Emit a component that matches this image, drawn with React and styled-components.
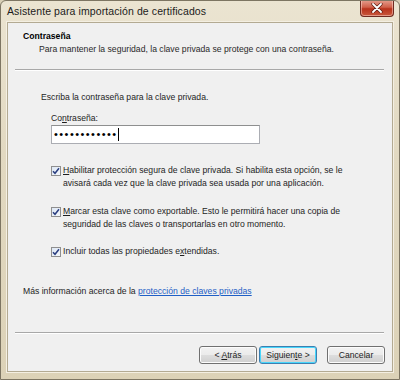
import styled, { createGlobalStyle } from "styled-components";

const GlobalStyle = createGlobalStyle`
  html, body {
    margin: 0;
    padding: 0;
    background: #d8cfb6;
  }
  * { box-sizing: border-box; }
`;

const Window = styled.div`
  width: 400px;
  height: 380px;
  display: flex;
  flex-direction: column;
  background: linear-gradient(180deg, #ebe4d1 0%, #e2d9c1 40%, #dcd2b7 100%);
  border: 1px solid #7d7562;
  border-radius: 6px 6px 0 0;
  font-family: "Liberation Sans", Arial, sans-serif;
  color: #1e1e1e;
  overflow: hidden;
`;

const TitleBar = styled.div`
  height: 21px;
  display: flex;
  align-items: flex-start;
  justify-content: space-between;
  padding-left: 6px;
`;

const Title = styled.div`
  font-size: 10.5px;
  line-height: 20px;
  color: #1b1b1b;
  letter-spacing: 0.1px;
`;

const CloseButton = styled.div`
  width: 34px;
  height: 17px;
  margin-right: 5px;
  margin-top: -1px;
  display: flex;
  align-items: center;
  justify-content: center;
  background: linear-gradient(180deg, #e6a090 0%, #d0604a 45%, #b8321c 55%, #c8583c 100%);
  border: 1px solid #6e2a20;
  border-top: none;
  border-radius: 0 0 4px 4px;
  box-shadow: inset 0 0 0 1px rgba(255, 220, 210, 0.5);
`;

const Client = styled.div`
  flex: 1;
  margin: 0 6px 7px 6px;
  display: flex;
  flex-direction: column;
  background: #f0f0f0;
  border: 1px solid #b3aa92;
  box-shadow: 0 0 0 1px #f4efe2;
  font-size: 8.65px;
`;

const Header = styled.div`
  padding: 8px 0 0 15px;
`;

const HeaderTitle = styled.div`
  font-weight: bold;
  line-height: 11px;
  color: #000;
`;

const HeaderText = styled.div`
  margin: 2px 0 0 16px;
  line-height: 11px;
  color: #2a2a2a;
`;

const Separator = styled.div`
  margin: ${(p) => p.$top}px 8px 0 7px;
  border-top: 1px solid #a8a8a8;
  border-bottom: 1px solid #ffffff;
`;

const Body = styled.div`
  padding-left: 33px;
  display: flex;
  flex-direction: column;
`;

const Line = styled.div`
  margin-top: ${(p) => p.$top || 0}px;
  margin-left: ${(p) => p.$indent || 0}px;
  line-height: 11px;
`;

const PasswordBox = styled.div`
  margin: 1px 0 0 10px;
  width: 209px;
  height: 19px;
  background: #fff;
  border: 1px solid #abadb3;
  border-top-color: #8e8f8f;
  display: flex;
  align-items: center;
  padding-left: 2px;
`;

const Dots = styled.span`
  font-size: 11px;
  line-height: 11px;
  letter-spacing: 1.45px;
  color: #000;
`;

const Caret = styled.span`
  width: 1px;
  height: 13px;
  background: #000;
`;

const CheckRow = styled.div`
  margin: ${(p) => p.$top}px 0 0 10px;
  display: flex;
  align-items: flex-start;
  gap: 2px;
  line-height: 13px;
  width: 310px;
`;

const Box = styled.span`
  flex: none;
  width: 10px;
  height: 10px;
  border: 1px solid #8f8f8f;
  background: linear-gradient(135deg, #dde7f4 0%, #f4f7fb 100%);
  display: flex;
  align-items: center;
  justify-content: center;
  margin-top: 1.5px;
`;

const Label = styled.div`
  flex: 1;
`;

const U = styled.span`
  text-decoration: underline;
`;

const InfoLine = styled.div`
  margin: 27px 0 0 15px;
  line-height: 13px;
`;

const Link = styled.a`
  color: #1f5fc6;
  text-decoration: underline;
`;

const Footer = styled.div`
  margin-top: auto;
  display: flex;
  flex-direction: column;
`;

const ButtonRow = styled.div`
  display: flex;
  justify-content: flex-end;
  padding: 12px 7px 7px 0;
`;

const Button = styled.div`
  width: 58px;
  height: 18px;
  margin-left: ${(p) => p.$gap}px;
  display: flex;
  align-items: center;
  justify-content: center;
  border: 1px solid ${(p) => (p.$default ? "#3c7fb1" : "#707070")};
  border-radius: 3px;
  background: linear-gradient(180deg, #f2f2f2 0%, #ebebeb 50%, #dddddd 51%, #cfcfcf 100%);
  box-shadow: inset 0 0 0 1px ${(p) => (p.$default ? "#48d6fb" : "#fcfcfc")};
  color: #1e1e1e;
`;

function Check() {
  return (
    <svg width="8" height="8" viewBox="0 0 8 8">
      <path d="M1 4.2 L3 6.3 L7 1.2" fill="none" stroke="#2a3e80" strokeWidth="1.5" />
    </svg>
  );
}

function CloseX() {
  return (
    <svg width="12" height="10" viewBox="0 0 12 10">
      <path d="M2 1 L10 9 M10 1 L2 9" stroke="#5a1a10" strokeWidth="3.2" strokeLinecap="round" />
      <path d="M2 1 L10 9 M10 1 L2 9" stroke="#ffffff" strokeWidth="1.8" strokeLinecap="round" />
    </svg>
  );
}

export default function App() {
  return (
    <Window>
      <GlobalStyle />
      <TitleBar>
        <Title>Asistente para importación de certificados</Title>
        <CloseButton>
          <CloseX />
        </CloseButton>
      </TitleBar>
      <Client>
        <Header>
          <HeaderTitle>Contraseña</HeaderTitle>
          <HeaderText>
            Para mantener la seguridad, la clave privada se protege con una contraseña.
          </HeaderText>
        </Header>
        <Separator $top={14} />
        <Body>
          <Line $top={21}>Escriba la contraseña para la clave privada.</Line>
          <Line $top={10} $indent={10}>
            Co<U>n</U>traseña:
          </Line>
          <PasswordBox>
            <Dots>••••••••••••</Dots>
            <Caret />
          </PasswordBox>
          <CheckRow $top={20}>
            <Box><Check /></Box>
            <Label>
              <U>H</U>abilitar protección segura de clave privada. Si habilita esta opción, se le
              avisará cada vez que la clave privada sea usada por una aplicación.
            </Label>
          </CheckRow>
          <CheckRow $top={15}>
            <Box><Check /></Box>
            <Label>
              <U>M</U>arcar esta clave como exportable. Esto le permitirá hacer una copia de
              seguridad de las claves o transportarlas en otro momento.
            </Label>
          </CheckRow>
          <CheckRow $top={14}>
            <Box><Check /></Box>
            <Label>
              Incluir todas las propiedades e<U>x</U>tendidas.
            </Label>
          </CheckRow>
        </Body>
        <InfoLine>
          Más información acerca de la <Link>protección de claves privadas</Link>
        </InfoLine>
        <Footer>
          <Separator $top={0} />
          <ButtonRow>
            <Button $gap={0}>
              <span>
                &lt; <U>A</U>trás
              </span>
            </Button>
            <Button $gap={2} $default>
              <span>
                Siguien<U>t</U>e &gt;
              </span>
            </Button>
            <Button $gap={10}>Cancelar</Button>
          </ButtonRow>
        </Footer>
      </Client>
    </Window>
  );
}
